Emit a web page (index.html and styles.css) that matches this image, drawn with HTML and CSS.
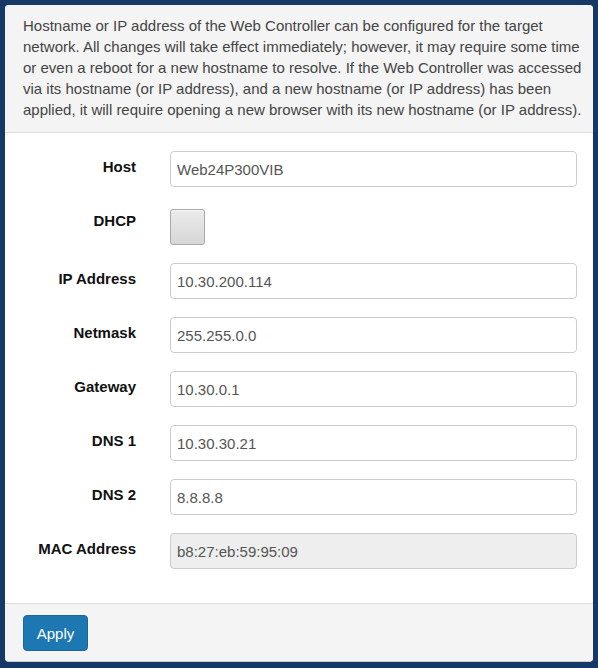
FILE: index.html
```html
<!DOCTYPE html>
<html>
<head>
<meta charset="utf-8">
<link rel="stylesheet" href="styles.css">
</head>
<body>
<div class="card">
  <div class="card-header">
    <p class="intro">Hostname or IP address of the Web Controller can be configured for the target network. All changes will take effect immediately; however, it may require some time or even a reboot for a new hostname to resolve. If the Web Controller was accessed via its hostname (or IP address), and a new hostname (or IP address) has been applied, it will require opening a new browser with its new hostname (or IP address).</p>
  </div>
  <form class="card-body">
    <div class="row"><label class="lbl">Host</label><input class="field" type="text" value="Web24P300VIB"></div>
    <div class="row row-check"><label class="lbl">DHCP</label><span class="checkbox"></span></div>
    <div class="row"><label class="lbl">IP Address</label><input class="field" type="text" value="10.30.200.114"></div>
    <div class="row"><label class="lbl">Netmask</label><input class="field" type="text" value="255.255.0.0"></div>
    <div class="row"><label class="lbl">Gateway</label><input class="field" type="text" value="10.30.0.1"></div>
    <div class="row"><label class="lbl">DNS 1</label><input class="field" type="text" value="10.30.30.21"></div>
    <div class="row"><label class="lbl">DNS 2</label><input class="field" type="text" value="8.8.8.8"></div>
    <div class="row"><label class="lbl">MAC Address</label><input class="field disabled" type="text" value="b8:27:eb:59:95:09" disabled></div>
  </form>
  <div class="card-footer">
    <button class="btn" type="button">Apply</button>
  </div>
</div>
</body>
</html>
```

FILE: styles.css
```css
html, body {
  margin: 0;
  padding: 0;
  background: #163866;
  font-family: "Liberation Sans", Arial, sans-serif;
}
body {
  padding: 5px 5px 6px 5px;
  height: 668px;
  box-sizing: border-box;
}
.card {
  background: #fff;
  border-radius: 4px;
  overflow: hidden;
  height: 657px;
  display: flex;
  flex-direction: column;
  border-bottom: 1px solid #ccc;
  box-sizing: border-box;
}
.card-header {
  background: #f4f4f4;
  border-bottom: 1px solid #ddd;
  padding: 10px 9px 11px 18px;
  height: 128px;
  box-sizing: border-box;
}
.intro {
  margin: 0;
  font-size: 15px;
  line-height: 21px;
  color: #444;
}
.card-body {
  margin: 0;
  padding: 18px 16px 0 18px;
  display: flex;
  flex-direction: column;
  gap: 18px;
  flex: 1;
}
.row {
  display: grid;
  grid-template-columns: 113px 1fr;
  column-gap: 34px;
  align-items: start;
  height: 36px;
}
.row-check {
  height: 40px;
}
.lbl {
  display: block;
  text-align: right;
  font-weight: bold;
  font-size: 15px;
  line-height: 20px;
  margin-top: 6px;
  color: #111;
}
.field {
  height: 36px;
  box-sizing: border-box;
  border: 1px solid #ccc;
  border-radius: 4px;
  padding: 0 6px;
  font-family: "Liberation Sans", Arial, sans-serif;
  font-size: 15px;
  color: #555;
  background: #fff;
  width: 100%;
  margin: 0;
}
.field.disabled {
  background: #eee;
  color: #555;
}
.checkbox {
  display: block;
  width: 35px;
  height: 36px;
  margin-top: 4px;
  box-sizing: border-box;
  border: 1px solid #a9a9a9;
  border-radius: 3px;
  background: linear-gradient(#ececec, #d6d6d6);
  box-shadow: inset 0 1px 0 #f8f8f8;
}
.card-footer {
  background: #f4f4f4;
  border-top: 1px solid #ddd;
  height: 58px;
  box-sizing: border-box;
  padding: 11px 18px 10px 18px;
}
.btn {
  width: 65px;
  height: 36px;
  background: #1d77b3;
  border: 1px solid #19689c;
  border-radius: 4px;
  color: #fff;
  font-family: "Liberation Sans", Arial, sans-serif;
  font-size: 15px;
  padding: 0;
}
```
